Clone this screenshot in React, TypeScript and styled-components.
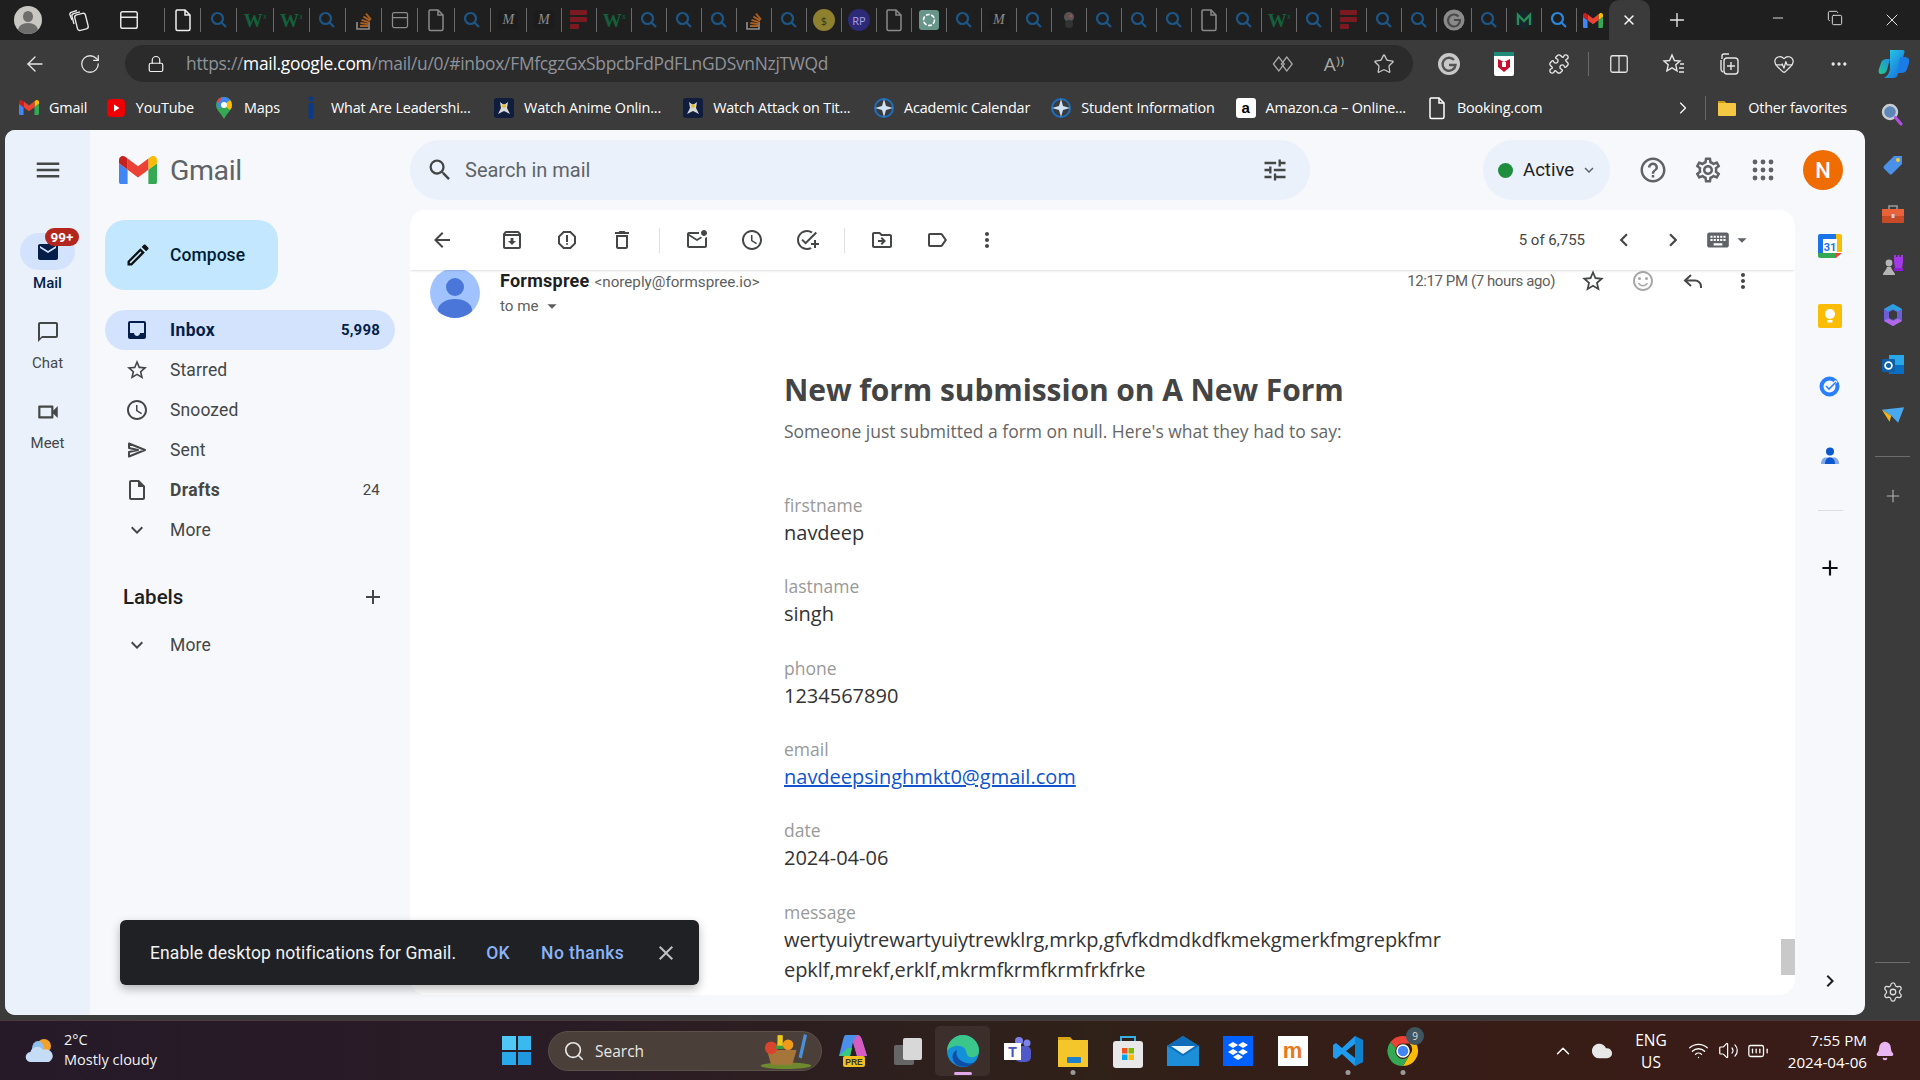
import React from 'react';
import styled, { createGlobalStyle } from 'styled-components';
import {
  ArrowLeft, RotateCw, Lock, Star, Puzzle, Columns2, MoreHorizontal, Plus, X, Minus, Copy,
  ChevronRight, Settings, Search, Wifi, Volume2, BatteryFull, ChevronUp, Bell, Cloud, HeartPulse,
  PanelTop,
} from 'lucide-react';
import {
  MdMenu, MdInbox, MdStarBorder, MdOutlineWatchLater, MdOutlineInsertDriveFile, MdExpandMore, MdAdd,
  MdOutlineChatBubbleOutline, MdOutlineVideocam, MdMail, MdArrowBack, MdOutlineArchive, MdOutlineReport,
  MdOutlineDelete, MdOutlineMarkEmailUnread, MdOutlineAddTask, MdOutlineDriveFileMove, MdOutlineLabel,
  MdMoreVert, MdChevronLeft, MdChevronRight, MdKeyboard, MdArrowDropDown, MdOutlineSentimentSatisfiedAlt,
  MdHelpOutline, MdOutlineSettings, MdSearch, MdTune, MdClose, MdOutlineEdit,
} from 'react-icons/md';

const Global = createGlobalStyle`
  html, body { margin: 0; padding: 0; background: #3b3b3b; overflow: hidden; }
  * { box-sizing: border-box; }
`;

const Page = styled.div`
  width: 1920px; height: 1080px; overflow: hidden; display: flex; flex-direction: column;
  font-family: "Open Sans", "Liberation Sans", sans-serif; background: #3b3b3b;
`;

/* ---------- tab strip ---------- */
const TabStrip = styled.div`
  height: 40px; background: #1f1f1f; display: flex; align-items: center; padding-left: 2px; color: #e6e6e6;
`;
const StripButton = styled.div`
  width: 50px; height: 40px; display: flex; align-items: center; justify-content: center; flex: none;
  &:first-child { width: 52px; }
`;
const Avatar = styled.div`
  width: 28px; height: 28px; border-radius: 50%; background: #c9c7c2; position: relative; overflow: hidden;
  &::before { content: ''; position: absolute; left: 9px; top: 5px; width: 10px; height: 11px; border-radius: 50%; background: #6d6d6b; }
  &::after { content: ''; position: absolute; left: 4px; top: 17px; width: 20px; height: 14px; border-radius: 50%; background: #6d6d6b; }
`;
const Tabs = styled.div`
  display: flex; margin-left: 10px; flex: none;
`;
const Tab = styled.div<{ $wide: boolean }>`
  width: ${p => (p.$wide ? 36.2 : 35)}px; height: 24px; flex: none; display: flex; align-items: center; justify-content: center;
  border-left: 1px solid #6a6a6a;
`;
const LastTab = styled(Tab)`
  width: 33px;
`;
const ActiveTab = styled.div`
  width: 41px; height: 40px; background: #3b3b3b; border-radius: 10px 10px 0 0; display: flex;
  align-items: center; justify-content: center; flex: none;
`;
const NewTab = styled.div`
  width: 54px; display: flex; justify-content: center; flex: none;
`;
const WindowControls = styled.div`
  margin-left: auto; display: flex;
`;
const WindowControl = styled.div`
  width: 57px; display: flex; justify-content: center;
`;
const W3 = styled.span`
  color: #13603a; font: 700 19px "Liberation Serif", serif; line-height: 1;
  sup { font-size: 7px; vertical-align: 8px; line-height: 0; }
`;
const MBadge = styled.span`
  width: 20px; height: 20px; background: #1c1c1c; color: #8c8c8c; display: flex; align-items: center; justify-content: center;
  font: italic 14px "Liberation Serif", serif;
`;
const RoundFav = styled.span<{ $bg: string; $fg: string }>`
  width: 22px; height: 22px; border-radius: 50%; background: ${p => p.$bg}; color: ${p => p.$fg};
  display: flex; align-items: center; justify-content: center; font: 11px "Open Sans", sans-serif;
`;

/* ---------- nav bar ---------- */
const NavBar = styled.div`
  height: 45px; background: #3b3b3b; display: flex; align-items: flex-start; padding: 5px 0 0 23px; color: #e6e6e6;
`;
const NavIcon = styled.div`
  width: 55px; height: 37px; display: flex; align-items: center; justify-content: center; flex: none;
`;
const SmallNavSlot = styled(NavIcon)`
  width: 24px; margin-right: 31px;
`;
const RefreshSlot = styled(NavIcon)`
  width: 24px; margin-right: 23px;
`;
const AddressBar = styled.div`
  width: 1288px; height: 37px; background: #2b2b2b; border-radius: 19px; display: flex; align-items: center;
  padding: 0 18px 0 22px; flex: none;
`;
const Url = styled.div`
  margin: -2px 0 0 21px; font-size: 17.4px; color: #8f9399; letter-spacing: -0.28px; white-space: nowrap;
  b { color: #fff; font-weight: 400; }
`;
const AddressTools = styled.div`
  margin-left: auto; display: flex; align-items: center; gap: 27px; color: #a8a8a8;
`;
const ReadAloud = styled.span`
  font: 19px "Open Sans", sans-serif; color: #a8a8a8; width: 24px; text-align: center;
`;
const ToolIcons = styled.div`
  display: flex; margin-left: 8px; align-items: center;
`;
const NavSep = styled.div`
  width: 1px; height: 24px; background: #6a6a6a; margin: 0 2px;
`;
const ToolCell = styled(NavIcon)`
  width: 55px;
`;

/* ---------- favourites ---------- */
const FavBar = styled.div`
  height: 45px; background: #3b3b3b; display: flex; align-items: center; padding-left: 19px; color: #fff;
`;
const FavItem = styled.div<{ $mr?: number }>`
  display: flex; align-items: center; gap: 10px; margin-right: ${p => p.$mr ?? 21}px; font-size: 14.4px; letter-spacing: -0.15px; white-space: nowrap;
`;
const FavIcon = styled.span`
  width: 20px; height: 20px; display: flex; align-items: center; justify-content: center; flex: none;
`;
const FavLetter = styled.span`
  width: 20px; height: 20px; border-radius: 3px; background: #fff; color: #000; font: 700 15px "Liberation Sans", sans-serif;
  display: flex; align-items: center; justify-content: center;
`;
const FavRight = styled.div`
  margin-left: auto; display: flex; align-items: center; color: #fff;
`;
const FavChevron = styled.div`
  width: 24px; display: flex; justify-content: center; margin-right: 10px; margin-left: 3px;
`;
const FavSep = styled.div`
  width: 1px; height: 24px; background: #666; margin-right: 11px;
`;
const OtherFav = styled(FavItem)`
  margin-right: 33px; gap: 11px;
`;
const EdgeSearch = styled.div`
  width: 24px; margin-right: 16px; margin-top: 12px; display: flex; justify-content: center;
`;

/* ---------- middle ---------- */
const Middle = styled.div`
  height: 890px; display: flex; padding-left: 5px;
`;
const GmailWindow = styled.div`
  width: 1860px; height: 885px; background: #f6f8fc; border-radius: 10px; display: flex; position: relative; overflow: hidden;
  font-family: Roboto, "Liberation Sans", sans-serif; flex: none;
`;
const Rail = styled.div`
  width: 85px; background: #eaf1fb; flex: none; display: flex; flex-direction: column; align-items: center; color: #444746;
`;
const RailMenu = styled.div`
  height: 80px; display: flex; align-items: center; justify-content: center; margin-bottom: 23px; color: #444746;
`;
const RailItem = styled.div<{ $active?: boolean }>`
  height: 80px; display: flex; flex-direction: column; align-items: center; font-size: 15px;
  color: ${p => (p.$active ? '#041e49' : '#444746')}; font-weight: ${p => (p.$active ? 500 : 400)};
`;
const RailPill = styled.div<{ $active?: boolean }>`
  width: 55px; height: 37px; border-radius: 19px; background: ${p => (p.$active ? '#d3e3fd' : 'transparent')};
  display: flex; align-items: center; justify-content: center; position: relative; margin-bottom: 3px;
`;
const RailLabel = styled.div`
  line-height: 20px;
`;
const Badge = styled.div`
  position: absolute; left: 25px; top: -5px; width: 34px; height: 18px; border-radius: 9px; background: #b3261e; color: #fff;
  font: 700 13.5px/18px Roboto, sans-serif; text-align: center;
`;
const MainCol = styled.div`
  flex: 1; display: flex; flex-direction: column; min-width: 0;
`;
const Header = styled.div`
  height: 80px; display: flex; align-items: center; flex: none; padding-right: 22px;
`;
const Logo = styled.div`
  width: 320px; padding-left: 29px; display: flex; align-items: center; gap: 13px; flex: none;
  font: 400 28.5px Roboto, sans-serif; color: #5f6368; letter-spacing: -0.4px;
`;
const SearchBox = styled.div`
  width: 900px; height: 60px; background: #eaf1fb; border-radius: 30px; display: flex; align-items: center;
  padding: 0 21px 0 16px; color: #444746; flex: none; gap: 11px;
`;
const SearchText = styled.div`
  font-size: 20px; color: #5f6368; flex: 1;
`;
const StatusCluster = styled.div`
  margin-left: auto; display: flex; align-items: center;
`;
const ActivePill = styled.div`
  width: 127px; height: 60px; border-radius: 30px; background: #eaf1fb; display: flex; align-items: center;
  padding-left: 15px; margin-right: 15.5px; font-size: 18.6px; color: #1f1f1f;
`;
const ActiveChevron = styled(MdExpandMore)`
  margin-left: 6px; color: #5f6368;
`;
const Dot = styled.span`
  width: 15px; height: 15px; border-radius: 50%; background: #1e8e3e; margin-right: 10px;
`;
const HeaderIcon = styled.div`
  width: 55px; display: flex; justify-content: center; color: #5f6368;
`;
const UserAvatar = styled.div`
  width: 40px; height: 40px; border-radius: 50%; background: #ef6c00; color: #fff; margin-left: 12.5px;
  display: flex; align-items: center; justify-content: center; font: 500 22px Roboto, sans-serif;
`;
const BodyRow = styled.div`
  flex: 1; display: flex; min-height: 0;
`;
const Sidebar = styled.div`
  width: 320px; flex: none; padding-left: 15px; padding-top: 10px; color: #444746;
`;
const Compose = styled.div`
  width: 173px; height: 70px; border-radius: 20px; background: #c2e7ff; display: flex; align-items: center;
  padding-left: 19px; gap: 18px; font-size: 17.5px; font-weight: 500; color: #001d35; margin-bottom: 20px; letter-spacing: 0.05px;
`;
const NavRow = styled.div<{ $active?: boolean; $bold?: boolean }>`
  width: 290px; height: 40px; border-radius: 20px; display: flex; align-items: center; padding: 0 15px 0 20px; gap: 21px;
  background: ${p => (p.$active ? '#d3e3fd' : 'transparent')};
  color: ${p => (p.$active ? '#041e49' : '#444746')};
  font-size: 17.5px; font-weight: ${p => (p.$bold ? 700 : 400)}; letter-spacing: ${p => (p.$bold ? 0.35 : 0.12)}px;
`;
const NavCount = styled.span<{ $strong?: boolean }>`
  margin-left: auto; font-size: 15px; font-weight: ${p => (p.$strong ? 700 : 400)}; letter-spacing: 0.2px;
`;
const LabelsHead = styled.div`
  width: 290px; height: 40px; margin-top: 27px; margin-bottom: 8px; display: flex; align-items: center; padding: 0 10.5px 0 18px;
  font-size: 20.5px; font-weight: 500; color: #1f1f1f; justify-content: space-between;
`;
const Card = styled.div`
  width: 1385px; height: 785px; background: #fff; border-radius: 16px; position: relative; overflow: hidden; flex: none;
  display: flex; flex-direction: column;
`;
const Toolbar = styled.div`
  height: 60px; flex: none; display: flex; align-items: center; padding: 0 42px 0 4.5px; color: #444746;
  position: relative; z-index: 2; background: #fff; box-shadow: 0 2px 2px -1px rgba(60,64,67,.18);
`;
const ToolBtn = styled.div<{ $mr?: number; $ml?: number }>`
  width: 55px; display: flex; justify-content: center; flex: none;
  margin-right: ${p => p.$mr ?? 0}px; margin-left: ${p => p.$ml ?? 0}px;
`;
const ToolSep = styled.div`
  width: 1px; height: 25px; background: #e0e0e0; margin: 0 9.5px; flex: none;
`;
const Pager = styled.div`
  margin-left: auto; font-size: 15px; color: #444746; margin-right: 14px;
`;
const PagerBtn = styled.div`
  width: 49px; display: flex; justify-content: center; color: #444746;
`;
const KeyboardBtn = styled.div`
  display: flex; align-items: center; margin-left: 8px; color: #5f6368;
`;
const Message = styled.div`
  flex: 1; min-height: 0; padding-left: 20px;
`;
const MsgHead = styled.div`
  display: flex; height: 48px; padding-right: 27px;
`;
const SenderPic = styled.div`
  width: 50px; height: 50px; margin-top: -2px; border-radius: 50%; background: #a0c3ff; position: relative; overflow: hidden; flex: none;
  &::before { content: ''; position: absolute; left: 16px; top: 10px; width: 18px; height: 18px; border-radius: 50%; background: #4a76d9; }
  &::after { content: ''; position: absolute; left: 8px; top: 31px; width: 34px; height: 22px; border-radius: 50%; background: #4a76d9; }
`;
const SenderInfo = styled.div`
  margin-left: 20px;
`;
const SenderLine = styled.div`
  height: 22px; line-height: 22px; white-space: nowrap;
`;
const SenderName = styled.span`
  font-size: 18px; font-weight: 700; color: #1f1f1f; letter-spacing: 0.25px;
`;
const SenderMail = styled.span`
  font-size: 15.2px; color: #5e5e5e; margin-left: 5px;
`;
const ToLine = styled.div`
  display: flex; align-items: center; font-size: 15.2px; color: #5e5e5e; margin-top: 3px; gap: 2px;
`;
const MsgActions = styled.div`
  margin-left: auto; display: flex; align-items: flex-start; height: 22px; color: #444746;
`;
const MsgTime = styled.div`
  font-size: 15px; color: #5e5e5e; line-height: 22px; margin-right: 13px; white-space: nowrap; letter-spacing: -0.4px;
`;
const MsgBtn = styled.div<{ $muted?: boolean }>`
  width: 50px; display: flex; justify-content: center; height: 22px; align-items: center;
  color: ${p => (p.$muted ? '#a8a8a8' : '#444746')};
`;
const MailBody = styled.div`
  margin-left: 354px; padding-top: 52px; font-family: "Open Sans", sans-serif;
`;
const Title = styled.div`
  font-size: 30px; font-weight: 700; color: #444; line-height: 40px; margin-bottom: 9px; letter-spacing: -0.08px;
`;
const Sub = styled.div`
  font-size: 17.5px; color: #666; line-height: 24px; margin-bottom: 50px;
`;
const Field = styled.div`
  height: 81.35px;
`;
const FieldLabel = styled.div`
  font-size: 17.5px; color: #999; line-height: 24px; margin-bottom: 1px;
`;
const FieldValue = styled.div`
  font-size: 20px; color: #333; line-height: 30px; white-space: nowrap;
`;
const MessageLine = styled(FieldValue)`
  letter-spacing: -0.06px;
`;
const MailLink = styled.a`
  color: #1155cc; text-decoration: underline;
`;
const ScrollThumb = styled.div`
  position: absolute; right: 0; bottom: 20px; width: 14px; height: 36px; background: #c9c9c9;
`;
const SidePanel = styled.div`
  width: 70px; flex: none; display: flex; flex-direction: column; align-items: center; padding-top: 1px; padding-bottom: 22px;
`;
const PanelSlot = styled.div`
  height: 70px; display: flex; align-items: center; justify-content: center; flex: none;
`;
const PanelSep = styled.div`
  width: 25px; height: 1px; background: #dadce0; margin-top: 19px;
`;
const PanelPlus = styled.div`
  margin-top: 44px; color: #111; display: flex;
`;
const PanelBottom = styled.div`
  margin-top: auto; color: #1f1f1f; display: flex;
`;
const Toast = styled.div`
  position: absolute; left: 115px; bottom: 30px; width: 579px; height: 65px; background: #202124; border-radius: 6px;
  box-shadow: 0 4px 10px rgba(0,0,0,.28); display: flex; align-items: center; padding-left: 30px; color: #f1f3f4;
  font-size: 17.5px; z-index: 5; white-space: nowrap; letter-spacing: 0.12px;
`;
const ToastAction = styled.span<{ $ml: number }>`
  color: #8ab4f8; font-weight: 500; margin-left: ${p => p.$ml}px; letter-spacing: 0.4px;
`;
const ToastClose = styled.span`
  margin-left: 30px; color: #bdc1c6; display: flex;
`;

/* ---------- edge bar ---------- */
const EdgeBar = styled.div`
  width: 55px; flex: none; display: flex; flex-direction: column; align-items: center; padding: 10px 0 8px; color: #ddd;
`;
const EdgeSlot = styled.div`
  height: 50px; display: flex; align-items: center; justify-content: center; flex: none;
`;
const EdgeSep = styled.div`
  width: 35px; height: 1px; background: #6d6d6d; margin-top: 16px; flex: none;
`;
const EdgePlus = styled.div`
  height: 40px; margin-top: 19px; display: flex; align-items: center; color: #b5b5b5;
`;
const EdgeBottom = styled.div`
  margin-top: auto; display: flex; flex-direction: column; align-items: center;
`;
const EdgeGear = styled.div`
  height: 40px; margin-top: 9px; display: flex; align-items: center;
`;

/* ---------- taskbar ---------- */
const Taskbar = styled.div`
  height: 60px; display: flex; align-items: center; color: #fff;
  background: linear-gradient(90deg, #261a29 0%, #2a1c25 30%, #2f2119 55%, #381c16 80%, #3a1c18 100%);
  border-top: 1px solid #4a3a3a;
`;
const Weather = styled.div`
  width: 502px; padding-left: 24px; display: flex; align-items: center; gap: 8px; flex: none;
`;
const WeatherText = styled.div`
  font-size: 14.5px; line-height: 20px; color: #f2f2f2; margin-top: -2px;
`;
const WinLogo = styled.div`
  width: 29px; height: 29px; display: grid; grid-template-columns: 1fr 1fr; gap: 2px; flex: none;
`;
const WinPane = styled.span<{ $c: string }>`
  background: ${p => p.$c};
`;
const TaskSearch = styled.div`
  width: 274px; height: 40px; border-radius: 20px; margin-left: 17px; background: #4a3f39; border: 1px solid #5c5149;
  display: flex; align-items: center; padding-left: 14px; gap: 10px; font-size: 15.5px; color: #e8e8e8; flex: none;
`;
const BasketArt = styled.div`
  margin-left: auto; margin-right: 5px; display: flex;
`;
const TaskApps = styled.div`
  display: flex; margin-left: 3px; flex: none;
`;
const TaskApp = styled.div<{ $active?: boolean }>`
  width: 55px; height: 50px; display: flex; align-items: center; justify-content: center; position: relative; flex: none;
  background: ${p => (p.$active ? 'rgba(255,255,255,.07)' : 'transparent')}; border-radius: 5px;
`;
const RunDot = styled.span<{ $active?: boolean }>`
  position: absolute; bottom: 1px; left: 50%; transform: translateX(-50%);
  width: ${p => (p.$active ? 18 : 5)}px; height: ${p => (p.$active ? 3 : 5)}px; border-radius: 3px;
  background: ${p => (p.$active ? '#e0a8e8' : '#9a9a9a')};
`;
const AppTile = styled.span<{ $bg: string; $fg?: string }>`
  width: 30px; height: 30px; background: ${p => p.$bg}; color: ${p => p.$fg ?? '#fff'}; display: flex; align-items: center; justify-content: center;
  font: 700 22px "Liberation Sans", sans-serif;
`;
const ChromeBadge = styled.span`
  position: absolute; right: 6px; top: 1px; width: 18px; height: 18px; border-radius: 50%; background: #3f5560; color: #ddd;
  font: 10px/18px "Open Sans", sans-serif; text-align: center;
`;
const Tray = styled.div`
  margin-left: auto; display: flex; align-items: center; flex: none; padding-right: 25px;
`;
const TraySlot = styled.div<{ $w: number }>`
  width: ${p => p.$w}px; display: flex; justify-content: center;
`;
const Lang = styled.div`
  width: 52px; text-align: center; font-size: 15.5px; line-height: 22px; margin: 0 6px 0 4px;
`;
const Clock = styled.div`
  width: 94px; text-align: right; font-size: 15.2px; line-height: 22px; white-space: nowrap;
`;
const BellSlot = styled.div`
  margin-left: 8px; color: #e9b5f2; display: flex;
`;

/* ---------- small drawings ---------- */
const GmailM = ({ size = 20 }: { size?: number }) => (
  <svg width={size} height={size * 0.75} viewBox="52 42 88 66">
    <path fill="#4285f4" d="M58 108h14V74L52 59v43c0 3.32 2.69 6 6 6" />
    <path fill="#34a853" d="M120 108h14c3.32 0 6-2.69 6-6V59l-20 15" />
    <path fill="#fbbc04" d="M120 48v26l20-15v-8c0-7.42-8.47-11.65-14.4-7.2" />
    <path fill="#ea4335" d="M72 74V48l24 18 24-18v26L96 92" />
    <path fill="#c5221f" d="M52 51v8l20 15V48l-5.6-4.2c-5.94-4.45-14.4-.22-14.4 7.2" />
  </svg>
);
const QIcon = ({ c = '#1c5687' }: { c?: string }) => (
  <svg width="20" height="20" viewBox="0 0 20 20" fill="none" stroke={c} strokeWidth="2.2">
    <circle cx="8.5" cy="8.5" r="5.5" /><path d="M12.5 12.5L17 17" />
  </svg>
);
const SOIcon = () => (
  <svg width="20" height="22" viewBox="0 0 20 22" fill="none">
    <path d="M3 13v7h12v-7" stroke="#8f8f8f" strokeWidth="1.6" />
    <path d="M6 17h8M6.4 14l8 1.2M7.5 10.8l7.6 2.6M9.4 7.6l6.8 4M12 4.6l5 6" stroke="#a85f22" strokeWidth="1.8" />
  </svg>
);
const DocIcon = ({ c = '#8a8a8a' }: { c?: string }) => (
  <svg width="18" height="24" viewBox="0 0 18 24" fill="none" stroke={c} strokeWidth="1.5">
    <path d="M3 2h8l5 5v14a1.5 1.5 0 0 1-1.5 1.5h-11A1.5 1.5 0 0 1 2 21V3.5A1.5 1.5 0 0 1 3 2z" /><path d="M11 2v5h5" />
  </svg>
);
const FredIcon = () => (
  <svg width="20" height="22" viewBox="0 0 20 22" fill="#7c1a22">
    <rect x="1" y="1" width="17" height="5" rx="1" /><rect x="1" y="8" width="17" height="5" rx="1" /><rect x="1" y="15" width="9" height="5" rx="1" />
  </svg>
);
const W3Fav = () => <W3>W<sup>3</sup></W3>;
const GptFav = () => (
  <svg width="20" height="20" viewBox="0 0 20 20"><rect width="20" height="20" rx="3" fill="#74aa9c" opacity=".85" /><circle cx="10" cy="10" r="5.5" fill="none" stroke="#fff" strokeWidth="1.6" strokeDasharray="4 1.5" /></svg>
);
const SpyFav = () => (
  <svg width="18" height="20" viewBox="0 0 18 20"><circle cx="9" cy="7" r="5" fill="#555" /><circle cx="9" cy="14" r="4" fill="#333" /><circle cx="11" cy="6" r="1.5" fill="#b34a4a" /></svg>
);
const GFav = () => (
  <svg width="22" height="22" viewBox="0 0 22 22"><circle cx="11" cy="11" r="10.5" fill="#8a8a8a" />
    <path d="M15.5 7.5A6 6 0 1 0 17 11h-6" fill="none" stroke="#4a4a4a" strokeWidth="2.2" /></svg>
);
const MGreen = () => (
  <svg width="22" height="22" viewBox="0 0 22 22" fill="none"><path d="M11 1l9 5v10l-9 5-9-5V6z" fill="#16262a" /><path d="M5 16V6l6 6 6-6v10" stroke="#2b8b57" strokeWidth="2.4" /></svg>
);
const StackedCards = () => (
  <svg width="24" height="24" viewBox="0 0 24 24" fill="none" stroke="#e6e6e6" strokeWidth="1.4">
    <rect x="9" y="6" width="11" height="16" rx="2.5" transform="rotate(-14 14 14)" /><path d="M7 16L5 8.500c-.4-1.500.4-2.500 1.800-2.900L13 3.800" /><path d="M5 12L3 7c-.4-1.500.4-2.500 1.800-2.900L10 2.500" />
  </svg>
);

type Fav = 'q' | 'w' | 'so' | 'doc' | 'win' | 'm' | 'red' | 's' | 'rp' | 'gpt' | 'spy' | 'g' | 'mg';
const tabs: Fav[] = ['doc','q','w','w','q','so','win','doc','q','m','m','red','w','q','q','q','so','q','s','rp','doc','gpt','q','m','q','spy','q','q','q','doc','q','w','q','red','q','q','g','q','mg'];

const TabFav = ({ kind, first }: { kind: Fav; first: boolean }) => {
  switch (kind) {
    case 'q': return <QIcon />;
    case 'w': return <W3Fav />;
    case 'so': return <SOIcon />;
    case 'doc': return <DocIcon c={first ? '#f0f0f0' : '#8a8a8a'} />;
    case 'win': return <PanelTop size={20} color="#8a8a8a" strokeWidth={1.5} />;
    case 'm': return <MBadge>M</MBadge>;
    case 'red': return <FredIcon />;
    case 's': return <RoundFav $bg="#8f8030" $fg="#3a3414">$</RoundFav>;
    case 'rp': return <RoundFav $bg="#2d2a78" $fg="#a9a6e6">RP</RoundFav>;
    case 'gpt': return <GptFav />;
    case 'spy': return <SpyFav />;
    case 'g': return <GFav />;
    case 'mg': return <MGreen />;
  }
};

const YouTube = () => (
  <svg width="20" height="20" viewBox="0 0 20 20"><rect y="1" x="1" width="18" height="18" rx="4" fill="#e00" /><path d="M8 6.500l5.500 3.500-5.500 3.500z" fill="#fff" /></svg>
);
const MapsPin = () => (
  <svg width="16" height="22" viewBox="0 0 16 22">
    <path d="M8 0a8 8 0 0 1 8 8c0 5-5 8-8 14C5 16 0 13 0 8a8 8 0 0 1 8-8z" fill="#34a853" />
    <path d="M8 0a8 8 0 0 1 6.2 3L3 12 1 5a8 8 0 0 1 7-5z" fill="#4285f4" /><path d="M14.2 3A8 8 0 0 1 16 8c0 2-1 4-2 5L8 8z" fill="#fbbc04" />
    <circle cx="8" cy="8" r="3" fill="#fff" /><path d="M1 4a8 8 0 0 1 5-4L3 6z" fill="#ea4335" />
  </svg>
);
const InfoFav = () => (
  <svg width="12" height="24" viewBox="0 0 12 24" fill="#0c3a8a"><circle cx="6" cy="3" r="2.5" /><rect x="3.6" y="7" width="4.8" height="16" rx="1" /></svg>
);
const AnimeFav = () => (
  <svg width="20" height="20" viewBox="0 0 20 20"><rect width="20" height="20" rx="3" fill="#101d3c" /><path d="M6 4l4 3 4-3-1 6 3 6-6-3-6 3 3-6z" fill="#d8d8d8" /><circle cx="10" cy="8" r="2" fill="#e3c030" /></svg>
);
const CompassFav = () => (
  <svg width="20" height="20" viewBox="0 0 20 20"><circle cx="10" cy="10" r="9" fill="none" stroke="#1d6fc2" strokeWidth="2" /><path d="M10 1l2 7 7 2-7 2-2 7-2-7-7-2 7-2z" fill="#cfe2f5" /></svg>
);
const FolderFav = () => (
  <svg width="20" height="20" viewBox="0 0 20 20"><path d="M1 4a1 1 0 0 1 1-1h5l2 2h9a1 1 0 0 1 1 1v11a1 1 0 0 1-1 1H2a1 1 0 0 1-1-1z" fill="#f4c842" /><path d="M1 4a1 1 0 0 1 1-1h5l2 2H1z" fill="#c99a1c" /></svg>
);
const EdgeSearchIcon = () => (
  <svg width="24" height="24" viewBox="0 0 24 24" fill="none"><circle cx="10" cy="10" r="7" stroke="#c9ccd0" strokeWidth="2.400" fill="#5c87b8" /><path d="M15.500 15.500L21 22" stroke="#b24fe0" strokeWidth="3" strokeLinecap="round" /></svg>
);
const GrammarlyIcon = () => (
  <svg width="24" height="24" viewBox="0 0 24 24"><circle cx="12" cy="12" r="11" fill="#c9c9c9" /><path d="M17 8a6.5 6.5 0 1 0 1.5 5H12" fill="none" stroke="#555" strokeWidth="2.4" /></svg>
);
const McAfee = () => (
  <svg width="20" height="24" viewBox="0 0 20 24"><rect width="20" height="24" rx="2" fill="#fff" /><rect width="20" height="4" fill="#1e8a78" /><path d="M4 7l6 3 6-3v8l-6 5-6-5z" fill="#c8102e" /><path d="M8 10h4v5H8z" fill="#fff" /></svg>
);
const SplitIcon = () => (
  <svg width="24" height="24" viewBox="0 0 24 24" fill="none" stroke="#a8a8a8" strokeWidth="1.4"><path d="M12 5l-6 7 6 7 6-7z" transform="translate(-3 0) scale(.9 1)" /><path d="M12 5l-6 7 6 7 6-7z" transform="translate(5 0) scale(.9 1)" /></svg>
);
const FavStar = () => (
  <svg width="24" height="24" viewBox="0 0 24 24" fill="none" stroke="#e6e6e6" strokeWidth="1.4"><path d="M10 3l2.4 5.5 5.6.5-4.2 3.8 1.2 6L10 15.8 4.9 18.8l1.3-6L2 9l5.6-.5z" /><path d="M18 12h4M17 16h5M17 20h5" /></svg>
);
const Collections = () => (
  <svg width="24" height="24" viewBox="0 0 24 24" fill="none" stroke="#e6e6e6" strokeWidth="1.4"><path d="M5 7V4a2 2 0 0 1 2-2h5" /><rect x="7" y="6" width="14" height="16" rx="3" /><path d="M14 10v8M10 14h8" /><path d="M4 8v9a3 3 0 0 0 2 3" /></svg>
);
const CopilotEdge = () => (
  <svg width="32" height="30" viewBox="0 0 32 30">
    <defs>
      <linearGradient id="cpa" x1="0" y1="0" x2="1" y2="1"><stop offset="0" stopColor="#2bd4e8" /><stop offset="1" stopColor="#1464d8" /></linearGradient>
      <linearGradient id="cpb" x1="0" y1="1" x2="1" y2="0"><stop offset="0" stopColor="#23c98c" /><stop offset="1" stopColor="#1e8fe6" /></linearGradient>
    </defs>
    <path d="M12 1h12c3 0 3 1 2 4l-6 20c-1 3-2 4-5 4H6c4-2 5-5 6-9z" fill="url(#cpa)" />
    <path d="M3 14c1-3 3-4 6-4h3l-3 11c-1 3-3 4-6 4-2 0-3-2-2-5z" fill="url(#cpb)" />
    <path d="M22 8h4c4 0 6 2 5 6l-2 6c-1 3-3 4-6 4h-4z" fill="#1b7ce8" />
  </svg>
);
const SentIcon = () => (
  <svg width="24" height="24" viewBox="0 0 24 24" fill="none" stroke="currentColor" strokeWidth="2" strokeLinejoin="round"><path d="M4 5.5L20 12 4 18.5V14l9-2-9-2z" /></svg>
);
const ReplyArrow = () => (
  <svg width="24" height="24" viewBox="0 0 24 24" fill="none" stroke="currentColor" strokeWidth="2"><path d="M10 6l-6 5.500 6 5.500" /><path d="M4 11.500h10a6 6 0 0 1 6 6v1.500" /></svg>
);
const GridDots = () => (
  <svg width="24" height="24" viewBox="0 0 24 24" fill="#5f6368">
    {[4, 12, 20].flatMap(y => [4, 12, 20].map(x => <circle key={`${x}-${y}`} cx={x} cy={y} r="2.4" />))}
  </svg>
);
const CalendarIcon = () => (
  <svg width="24" height="24" viewBox="0 0 24 24">
    <rect width="24" height="24" rx="2" fill="#fff" /><path d="M0 2a2 2 0 0 1 2-2h16v5H5v14H0z" fill="#1a73e8" /><path d="M18 0h4a2 2 0 0 1 2 2v16h-5V5h-1z" fill="#fbbc04" />
    <path d="M0 19h18v5H2a2 2 0 0 1-2-2z" fill="#34a853" /><path d="M18 19h6l-6 5z" fill="#ea4335" />
    <text x="12" y="17" textAnchor="middle" fontSize="11" fontWeight="700" fontFamily="Roboto" fill="#1a73e8">31</text>
  </svg>
);
const KeepIcon = () => (
  <svg width="24" height="24" viewBox="0 0 24 24"><rect width="24" height="24" rx="2" fill="#fbbc04" /><circle cx="12" cy="10" r="5" fill="#fff" /><rect x="9.5" y="16" width="5" height="2.5" fill="#fff" /></svg>
);
const TasksIcon = () => (
  <svg width="24" height="24" viewBox="0 0 24 24" fill="none"><circle cx="11.5" cy="12.5" r="8" stroke="#2a7fff" strokeWidth="4" /><path d="M7.5 12l3 3 8-8" stroke="#fff" strokeWidth="3" /><path d="M8 12l3 3 7-7" stroke="#2a7fff" strokeWidth="1.6" /></svg>
);
const ContactsIcon = () => (
  <svg width="24" height="24" viewBox="0 0 24 24"><circle cx="12" cy="7.5" r="4" fill="#0b57d0" /><path d="M3 20c0-4 2-6.5 5-6.5h8c3 0 5 2.5 5 6.5z" fill="#82a8ea" /><path d="M7 20c0-4 2-6.5 5-6.5s5 2.5 5 6.5z" fill="#0b57d0" /></svg>
);
const TagIcon = () => (
  <svg width="24" height="24" viewBox="0 0 24 24"><path d="M3 13L13 3h8v8L11 21a2 2 0 0 1-2.6 0L3 15.6a2 2 0 0 1 0-2.6z" fill="#4a90e8" /><circle cx="17" cy="7" r="2" fill="#f5c92b" /></svg>
);
const ToolboxIcon = () => (
  <svg width="24" height="24" viewBox="0 0 24 24"><path d="M8 6V3h8v3" fill="none" stroke="#999" strokeWidth="1.6" /><rect x="1" y="6" width="22" height="7" fill="#e8623a" /><rect x="1" y="13" width="22" height="7" rx="1" fill="#c84b28" /><rect x="10.5" y="11" width="3" height="4" fill="#ccc" /></svg>
);
const ChessIcon = () => (
  <svg width="26" height="26" viewBox="0 0 26 26"><circle cx="9" cy="11" r="3.4" fill="#b5b5b5" /><path d="M3 23c0-3 3-4 4-8h4c1 4 4 5 4 8z" fill="#b5b5b5" /><path d="M14 3h2v2h1.500V3h2v2H21V3h2v7l-1 6h-7l-1-6z" fill="#a238e6" /><rect x="14" y="16" width="9" height="3" fill="#8c20d0" /></svg>
);
const M365Icon = () => (
  <svg width="24" height="24" viewBox="0 0 24 24"><path d="M12 1l9 5v12l-9 5-9-5V6z" fill="#6b5ed8" /><path d="M12 1l9 5-4 2.500-5-2.500-5 2.500-4-2.500z" fill="#2aa0e0" /><path d="M3 18l4-2.500 5 2.500 5-2.500 4 2.500-9 5z" fill="#b268e6" /><path d="M8 9l4-2 4 2v6l-4 2-4-2z" fill="#3b3b3b" /></svg>
);
const OutlookIcon = () => (
  <svg width="24" height="24" viewBox="0 0 24 24"><rect x="8" y="2" width="15" height="14" fill="#28a8ea" /><path d="M8 12h15v9H8z" fill="#0a6fc2" /><rect x="1" y="6" width="13" height="13" rx="1" fill="#0f5ea8" /><circle cx="7.500" cy="12.500" r="3.400" fill="none" stroke="#fff" strokeWidth="1.800" /></svg>
);
const PlaneIcon = () => (
  <svg width="24" height="18" viewBox="0 0 28 20"><path d="M1 4l26-3-7 18-8-8z" fill="#4aa8ee" /><path d="M1 4l11 7-2 7z" fill="#f4b31c" /></svg>
);
const WeatherIcon = () => (
  <svg width="32" height="32" viewBox="0 0 32 32"><circle cx="20" cy="11" r="7" fill="#f4a12a" /><ellipse cx="14" cy="14" rx="6" ry="8" fill="#8fc0ee" /><path d="M7 27a5 5 0 0 1-.6-10A7 7 0 0 1 19 15a5.500 5.500 0 0 1 6 12z" fill="#c5dcf6" /></svg>
);
const Basket = () => (
  <svg width="58" height="38" viewBox="0 0 54 36"><ellipse cx="26" cy="32" rx="24" ry="3" fill="#6f8a2e" /><path d="M8 17h28l-4 14H12z" fill="#a6753a" /><circle cx="12" cy="15" r="6" fill="#d8452c" /><path d="M20 2l4 14h-8z" fill="#3f9a3f" /><circle cx="28" cy="12" r="5" fill="#f09a1c" /><rect x="18" y="3" width="5" height="10" fill="#f0c81c" /><path d="M43 2l3 1-5 22-3-1z" fill="#4a90d8" /></svg>
);
const CopilotPre = () => (
  <svg width="30" height="34" viewBox="0 0 30 34">
    <path d="M8 1h11c3 0 4 2 5 5l5 16H19L15 8l-3 14H1L5 6c1-3 1-5 3-5z" fill="#4a8fe8" /><path d="M15 8l4 14h10L24 6c-1-3-2-5-5-5z" fill="#d65cc4" /><path d="M1 22h11l2-8-4 0z" fill="#3ac87c" />
    <rect x="5" y="22" width="22" height="11" rx="2" fill="#f0c020" /><text x="16" y="31" fontSize="8.500" fontWeight="700" textAnchor="middle" fontFamily="Liberation Sans" fill="#333">PRE</text>
  </svg>
);
const TaskView = () => (
  <svg width="32" height="32" viewBox="0 0 32 32"><rect x="2" y="10" width="20" height="20" rx="2" fill="#666" /><rect x="11" y="3" width="19" height="22" rx="2" fill="#d8d8d8" /></svg>
);
const EdgeLogo = () => (
  <svg width="34" height="34" viewBox="0 0 34 34"><circle cx="17" cy="17" r="16" fill="#1490d8" /><path d="M1 17A16 16 0 0 1 33 17c0 5-5 7-9 6-5-1-2-7-7-10-6-3-13 0-16 4z" fill="#42d07c" opacity=".85" /><path d="M11 31c-6-4-6-13 0-15-2 6 2 11 9 13 4 1 7 0 9-1-5 5-12 6-18 3z" fill="#0c4ea8" /></svg>
);
const TeamsIcon = () => (
  <svg width="30" height="30" viewBox="0 0 30 30"><circle cx="24" cy="7" r="3.500" fill="#7b83eb" /><circle cx="16" cy="5" r="4" fill="#7b83eb" /><rect x="12" y="10" width="16" height="16" rx="5" fill="#5059c9" /><rect x="1" y="7" width="17" height="17" fill="#fff" /><text x="9.500" y="20.500" fontSize="14" fontWeight="700" textAnchor="middle" fontFamily="Liberation Sans" fill="#4b53bc">T</text></svg>
);
const ExplorerIcon = () => (
  <svg width="30" height="32" viewBox="0 0 30 32"><path d="M0 2h12l3 3h15v27H0z" fill="#d9a514" /><rect y="5" width="30" height="27" rx="1" fill="#f4c62c" /><rect x="9" y="22" width="14" height="6" rx="1" fill="#1d7fd0" /></svg>
);
const StoreIcon = () => (
  <svg width="30" height="34" viewBox="0 0 30 34"><path d="M8 8V3h14v5" fill="none" stroke="#35b0e6" strokeWidth="2" /><rect y="7" width="30" height="27" rx="3" fill="#e8e8e8" /><rect x="9" y="14" width="5.500" height="5.500" fill="#f25022" /><rect x="15.500" y="14" width="5.500" height="5.500" fill="#7fba00" /><rect x="9" y="20.500" width="5.500" height="5.500" fill="#00a4ef" /><rect x="15.500" y="20.500" width="5.500" height="5.500" fill="#ffb900" /></svg>
);
const MailIcon = () => (
  <svg width="32" height="30" viewBox="0 0 32 30"><path d="M0 10L16 0l16 10v20H0z" fill="#1c8fd8" /><path d="M16 0L0 10l16 10 16-10z" fill="#0f6cb8" /><path d="M4 10h24l-12 8z" fill="#eaf4fb" /></svg>
);
const DropboxIcon = () => (
  <svg width="20" height="20" viewBox="0 0 20 20" fill="#fff"><path d="M5 1l5 3-5 3-5-3zM15 1l5 3-5 3-5-3zM5 8l5 3-5 3-5-3zM15 8l5 3-5 3-5-3zM10 13l5 3-5 3-5-3z" /></svg>
);
const VSCodeIcon = () => (
  <svg width="32" height="32" viewBox="0 0 32 32"><path d="M23 1l8 4v22l-8 4-13-12-6 5-3-2V10l3-2 6 5z" fill="#1f9cf0" /><path d="M23 9l-9 7 9 7z" fill="#2b2320" /><path d="M23 1l8 4v22l-8 4z" fill="#0065a9" opacity=".5" /></svg>
);
const ChromeIcon = () => (
  <svg width="32" height="32" viewBox="0 0 32 32"><path d="M16 1a15 15 0 0 1 13 7.500H16a7.500 7.500 0 0 0-7 5L3.500 7A15 15 0 0 1 16 1z" fill="#ea4335" /><path d="M29 8.500A15 15 0 0 1 16 31l6.500-11a7.500 7.500 0 0 0 0-11.500z" fill="#fbbc04" /><path d="M3.500 7A15 15 0 0 0 16 31l6.500-11a7.500 7.500 0 0 1-13.500-6.500z" fill="#34a853" /><circle cx="16" cy="16" r="6" fill="#4285f4" stroke="#fff" strokeWidth="1.500" /></svg>
);

const favs: { icon: React.ReactNode; label: string; mr: number }[] = [
  { icon: <GmailM size={20} />, label: 'Gmail', mr: 18.5 },
  { icon: <YouTube />, label: 'YouTube', mr: 20 },
  { icon: <MapsPin />, label: 'Maps', mr: 21 },
  { icon: <InfoFav />, label: 'What Are Leadershi...', mr: 23.5 },
  { icon: <AnimeFav />, label: 'Watch Anime Onlin...', mr: 22 },
  { icon: <AnimeFav />, label: 'Watch Attack on Tit...', mr: 23.5 },
  { icon: <CompassFav />, label: 'Academic Calendar', mr: 21 },
  { icon: <CompassFav />, label: 'Student Information', mr: 21 },
  { icon: <FavLetter>a</FavLetter>, label: 'Amazon.ca – Online...', mr: 21 },
  { icon: <DocIcon c="#fff" />, label: 'Booking.com', mr: 21 },
];

const fields = [
  { k: 'firstname', v: 'navdeep' },
  { k: 'lastname', v: 'singh' },
  { k: 'phone', v: '1234567890' },
  { k: 'email', v: <MailLink href="#">navdeepsinghmkt0@gmail.com</MailLink> },
  { k: 'date', v: '2024-04-06' },
];

export default function App() {
  return (
    <Page>
      <Global />
      <TabStrip>
        <StripButton><Avatar /></StripButton>
        <StripButton><StackedCards /></StripButton>
        <StripButton><PanelTop size={22} strokeWidth={1.6} /></StripButton>
        <Tabs>
          {tabs.map((t, i) => (
            <Tab key={i} $wide={i < 10}><TabFav kind={t} first={i === 0} /></Tab>
          ))}
          <Tab $wide={false}><QIcon c="#2a86d8" /></Tab>
          <LastTab $wide={false}><GmailM size={20} /></LastTab>
        </Tabs>
        <ActiveTab><X size={16} color="#fff" /></ActiveTab>
        <NewTab><Plus size={22} strokeWidth={1.5} /></NewTab>
        <WindowControls>
          <WindowControl><Minus size={16} strokeWidth={1.4} /></WindowControl>
          <WindowControl><Copy size={16} strokeWidth={1.4} /></WindowControl>
          <WindowControl><X size={20} strokeWidth={1.2} /></WindowControl>
        </WindowControls>
      </TabStrip>

      <NavBar>
        <SmallNavSlot><ArrowLeft size={24} strokeWidth={1.4} /></SmallNavSlot>
        <RefreshSlot><RotateCw size={22} strokeWidth={1.4} /></RefreshSlot>
        <AddressBar>
          <Lock size={18} strokeWidth={1.6} color="#f0f0f0" />
          <Url>https://<b>mail.google.com</b>/mail/u/0/#inbox/FMfcgzGxSbpcbFdPdFLnGDSvnNzjTWQd</Url>
          <AddressTools>
            <SplitIcon />
            <ReadAloud>A⁾⁾</ReadAloud>
            <Star size={22} strokeWidth={1.4} color="#c8c8c8" />
          </AddressTools>
        </AddressBar>
        <ToolIcons>
          <ToolCell><GrammarlyIcon /></ToolCell>
          <ToolCell><McAfee /></ToolCell>
          <ToolCell><Puzzle size={22} strokeWidth={1.5} /></ToolCell>
          <NavSep />
          <ToolCell><Columns2 size={22} strokeWidth={1.4} /></ToolCell>
          <ToolCell><FavStar /></ToolCell>
          <ToolCell><Collections /></ToolCell>
          <ToolCell><HeartPulse size={22} strokeWidth={1.4} /></ToolCell>
          <ToolCell><MoreHorizontal size={20} /></ToolCell>
          <ToolCell><CopilotEdge /></ToolCell>
        </ToolIcons>
      </NavBar>

      <FavBar>
        {favs.map(f => (
          <FavItem key={f.label} $mr={f.mr}><FavIcon>{f.icon}</FavIcon>{f.label}</FavItem>
        ))}
        <FavRight>
          <FavChevron><ChevronRight size={20} strokeWidth={1.4} /></FavChevron>
          <FavSep />
          <OtherFav><FolderFav />Other favorites</OtherFav>
          <EdgeSearch><EdgeSearchIcon /></EdgeSearch>
        </FavRight>
      </FavBar>

      <Middle>
        <GmailWindow>
          <Rail>
            <RailMenu><MdMenu size={30} /></RailMenu>
            <RailItem $active>
              <RailPill $active><MdMail size={24} color="#041e49" /><Badge>99+</Badge></RailPill>
              <RailLabel>Mail</RailLabel>
            </RailItem>
            <RailItem>
              <RailPill><MdOutlineChatBubbleOutline size={24} /></RailPill>
              <RailLabel>Chat</RailLabel>
            </RailItem>
            <RailItem>
              <RailPill><MdOutlineVideocam size={26} /></RailPill>
              <RailLabel>Meet</RailLabel>
            </RailItem>
          </Rail>
          <MainCol>
            <Header>
              <Logo><GmailM size={38} />Gmail</Logo>
              <SearchBox>
                <MdSearch size={28} />
                <SearchText>Search in mail</SearchText>
                <MdTune size={28} />
              </SearchBox>
              <StatusCluster>
                <ActivePill><Dot />Active<ActiveChevron size={18} /></ActivePill>
                <HeaderIcon><MdHelpOutline size={30} /></HeaderIcon>
                <HeaderIcon><MdOutlineSettings size={30} /></HeaderIcon>
                <HeaderIcon><GridDots /></HeaderIcon>
                <UserAvatar>N</UserAvatar>
              </StatusCluster>
            </Header>
            <BodyRow>
              <Sidebar>
                <Compose><MdOutlineEdit size={28} color="#111" />Compose</Compose>
                <NavRow $active $bold><MdInbox size={24} />Inbox<NavCount $strong>5,998</NavCount></NavRow>
                <NavRow><MdStarBorder size={24} />Starred</NavRow>
                <NavRow><MdOutlineWatchLater size={24} />Snoozed</NavRow>
                <NavRow><SentIcon />Sent</NavRow>
                <NavRow $bold><MdOutlineInsertDriveFile size={24} />Drafts<NavCount>24</NavCount></NavRow>
                <NavRow><MdExpandMore size={24} />More</NavRow>
                <LabelsHead>Labels<MdAdd size={24} color="#444746" /></LabelsHead>
                <NavRow><MdExpandMore size={24} />More</NavRow>
              </Sidebar>
              <Card>
                <Toolbar>
                  <ToolBtn $mr={15}><MdArrowBack size={24} /></ToolBtn>
                  <ToolBtn><MdOutlineArchive size={24} /></ToolBtn>
                  <ToolBtn><MdOutlineReport size={24} /></ToolBtn>
                  <ToolBtn><MdOutlineDelete size={24} /></ToolBtn>
                  <ToolSep />
                  <ToolBtn><MdOutlineMarkEmailUnread size={24} /></ToolBtn>
                  <ToolBtn><MdOutlineWatchLater size={24} /></ToolBtn>
                  <ToolBtn><MdOutlineAddTask size={24} /></ToolBtn>
                  <ToolSep />
                  <ToolBtn><MdOutlineDriveFileMove size={24} /></ToolBtn>
                  <ToolBtn><MdOutlineLabel size={24} /></ToolBtn>
                  <ToolBtn $ml={-5}><MdMoreVert size={24} /></ToolBtn>
                  <Pager>5 of 6,755</Pager>
                  <PagerBtn><MdChevronLeft size={26} /></PagerBtn>
                  <PagerBtn><MdChevronRight size={26} /></PagerBtn>
                  <KeyboardBtn><MdKeyboard size={26} /><MdArrowDropDown size={22} /></KeyboardBtn>
                </Toolbar>
                <Message>
                  <MsgHead>
                    <SenderPic />
                    <SenderInfo>
                      <SenderLine><SenderName>Formspree</SenderName><SenderMail>&lt;noreply@formspree.io&gt;</SenderMail></SenderLine>
                      <ToLine>to me<MdArrowDropDown size={22} /></ToLine>
                    </SenderInfo>
                    <MsgActions>
                      <MsgTime>12:17 PM (7 hours ago)</MsgTime>
                      <MsgBtn><MdStarBorder size={26} /></MsgBtn>
                      <MsgBtn $muted><MdOutlineSentimentSatisfiedAlt size={24} /></MsgBtn>
                      <MsgBtn><ReplyArrow /></MsgBtn>
                      <MsgBtn><MdMoreVert size={24} /></MsgBtn>
                    </MsgActions>
                  </MsgHead>
                  <MailBody>
                    <Title>New form submission on A New Form</Title>
                    <Sub>Someone just submitted a form on null. Here's what they had to say:</Sub>
                    {fields.map(f => (
                      <Field key={f.k}>
                        <FieldLabel>{f.k}</FieldLabel>
                        <FieldValue>{f.v}</FieldValue>
                      </Field>
                    ))}
                    <FieldLabel>message</FieldLabel>
                    <MessageLine>wertyuiytrewartyuiytrewklrg,mrkp,gfvfkdmdkdfkmekgmerkfmgrepkfmr</MessageLine>
                    <MessageLine>epklf,mrekf,erklf,mkrmfkrmfkrmfrkfrke</MessageLine>
                  </MailBody>
                </Message>
                <ScrollThumb />
              </Card>
              <SidePanel>
                <PanelSlot><CalendarIcon /></PanelSlot>
                <PanelSlot><KeepIcon /></PanelSlot>
                <PanelSlot><TasksIcon /></PanelSlot>
                <PanelSlot><ContactsIcon /></PanelSlot>
                <PanelSep />
                <PanelPlus><MdAdd size={26} /></PanelPlus>
                <PanelBottom><MdChevronRight size={24} /></PanelBottom>
              </SidePanel>
            </BodyRow>
          </MainCol>
          <Toast>
            Enable desktop notifications for Gmail.
            <ToastAction $ml={30}>OK</ToastAction>
            <ToastAction $ml={31}>No thanks</ToastAction>
            <ToastClose><MdClose size={24} /></ToastClose>
          </Toast>
        </GmailWindow>
        <EdgeBar>
          <EdgeSlot><TagIcon /></EdgeSlot>
          <EdgeSlot><ToolboxIcon /></EdgeSlot>
          <EdgeSlot><ChessIcon /></EdgeSlot>
          <EdgeSlot><M365Icon /></EdgeSlot>
          <EdgeSlot><OutlookIcon /></EdgeSlot>
          <EdgeSlot><PlaneIcon /></EdgeSlot>
          <EdgeSep />
          <EdgePlus><Plus size={20} strokeWidth={1.3} /></EdgePlus>
          <EdgeBottom>
            <EdgeSep />
            <EdgeGear><Settings size={22} strokeWidth={1.4} /></EdgeGear>
          </EdgeBottom>
        </EdgeBar>
      </Middle>

      <Taskbar>
        <Weather>
          <WeatherIcon />
          <WeatherText>2°C<br />Mostly cloudy</WeatherText>
        </Weather>
        <WinLogo>
          <WinPane $c="#4fc8f5" /><WinPane $c="#3ab8f0" /><WinPane $c="#2aa8ea" /><WinPane $c="#2098e0" />
        </WinLogo>
        <TaskSearch>
          <Search size={22} strokeWidth={1.8} />
          Search
          <BasketArt><Basket /></BasketArt>
        </TaskSearch>
        <TaskApps>
          <TaskApp><CopilotPre /></TaskApp>
          <TaskApp><TaskView /></TaskApp>
          <TaskApp $active><EdgeLogo /><RunDot $active /></TaskApp>
          <TaskApp><TeamsIcon /></TaskApp>
          <TaskApp><ExplorerIcon /><RunDot /></TaskApp>
          <TaskApp><StoreIcon /></TaskApp>
          <TaskApp><MailIcon /></TaskApp>
          <TaskApp><AppTile $bg="#0061fe"><DropboxIcon /></AppTile></TaskApp>
          <TaskApp><AppTile $bg="#fff" $fg="#e8781e">m</AppTile></TaskApp>
          <TaskApp><VSCodeIcon /><RunDot /></TaskApp>
          <TaskApp><ChromeIcon /><ChromeBadge>9</ChromeBadge><RunDot /></TaskApp>
        </TaskApps>
        <Tray>
          <TraySlot $w={40}><ChevronUp size={22} strokeWidth={1.6} /></TraySlot>
          <TraySlot $w={38}><Cloud size={22} fill="#e8e8e8" color="#e8e8e8" /></TraySlot>
          <Lang>ENG<br />US</Lang>
          <TraySlot $w={30}><Wifi size={21} strokeWidth={1.5} /></TraySlot>
          <TraySlot $w={30}><Volume2 size={21} strokeWidth={1.4} /></TraySlot>
          <TraySlot $w={30}><BatteryFull size={22} strokeWidth={1.4} /></TraySlot>
          <Clock>7:55 PM<br />2024-04-06</Clock>
          <BellSlot><Bell size={20} fill="#e9b5f2" /></BellSlot>
        </Tray>
      </Taskbar>
    </Page>
  );
}
